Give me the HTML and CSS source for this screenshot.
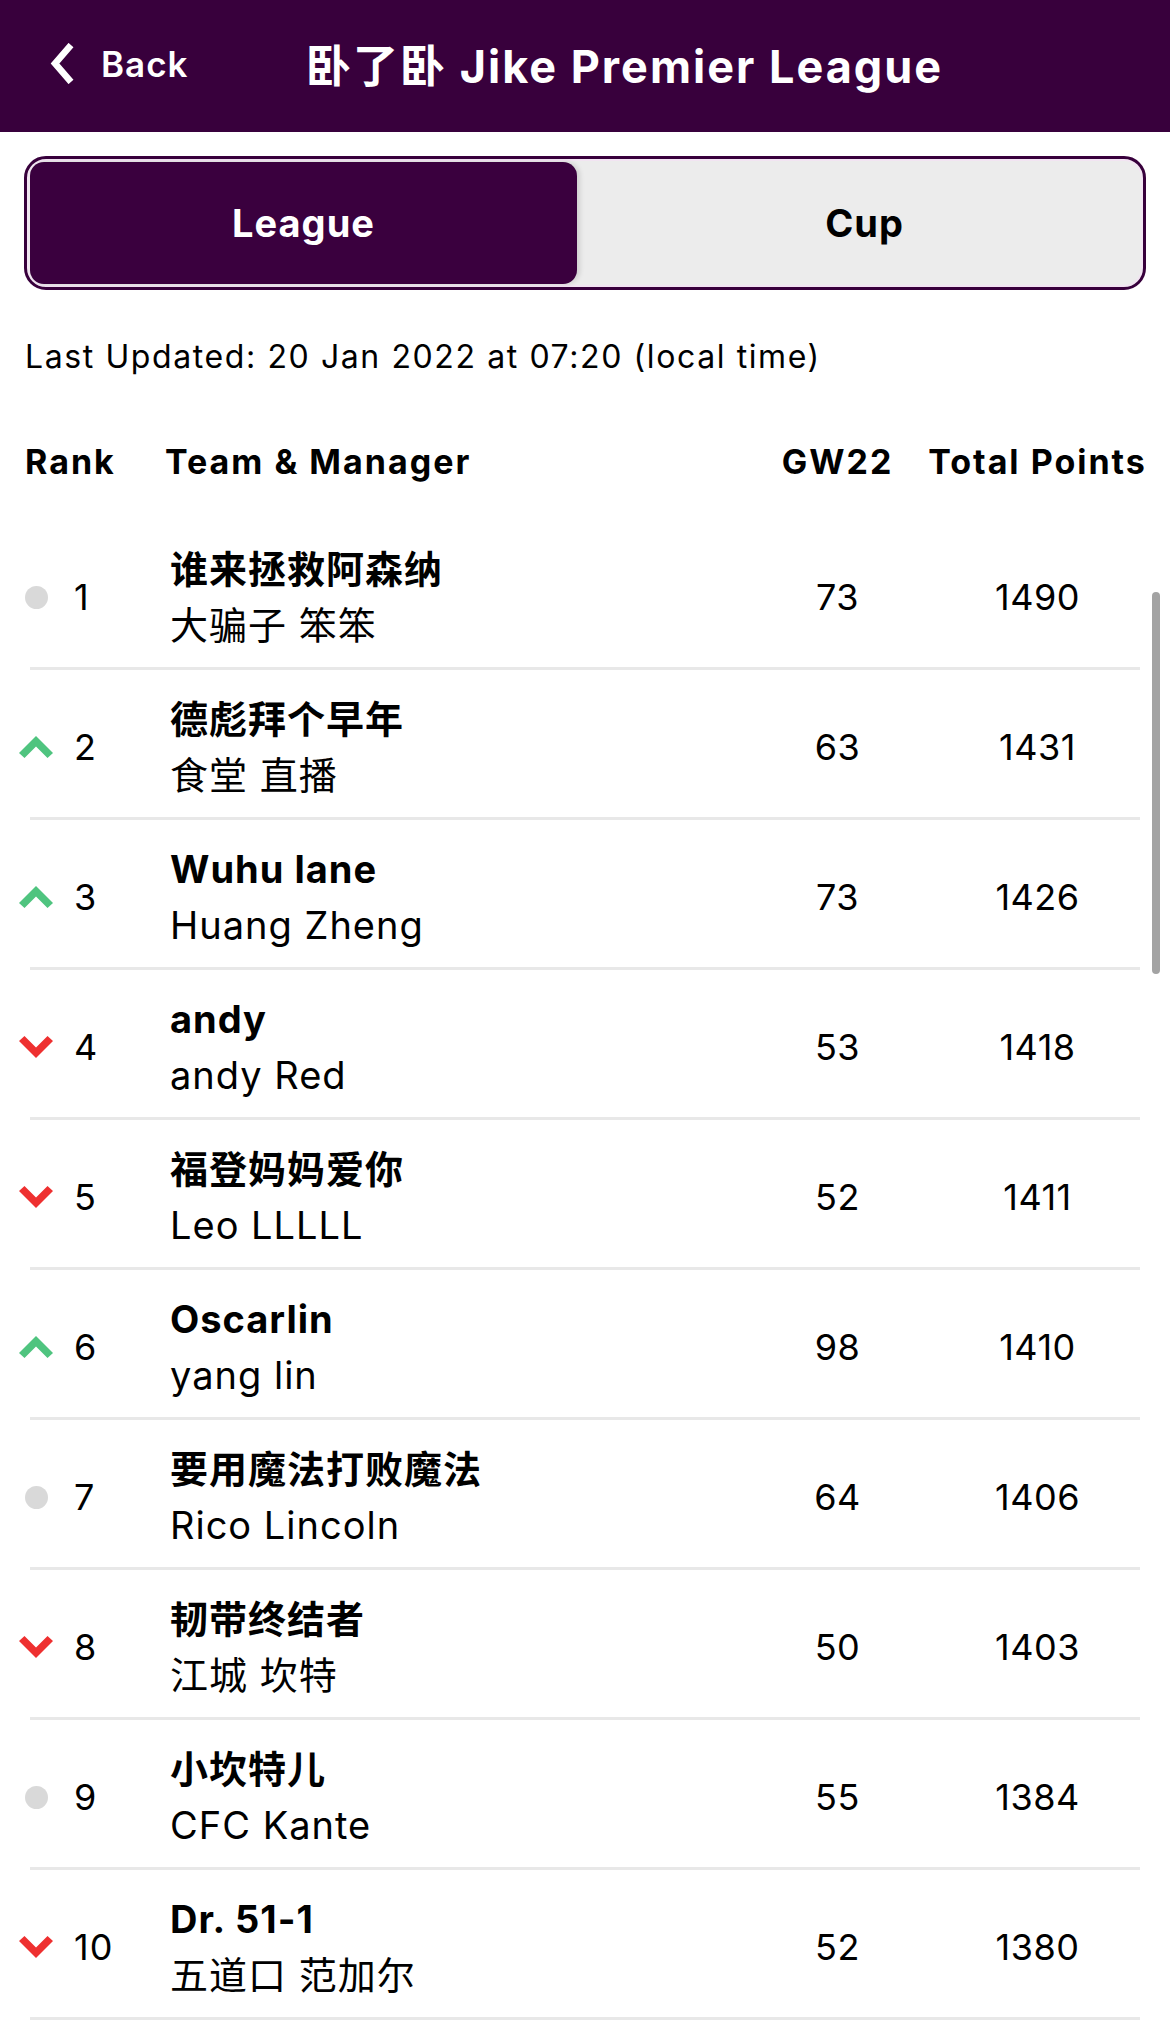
FILE: index.html
```html
<!DOCTYPE html>
<html lang="zh">
<head>
<meta charset="utf-8">
<title>Jike Premier League</title>
<link rel="stylesheet" href="styles.css">
</head>
<body>
<header class="topbar">
  <div class="back">
    <svg class="back-icon" width="26" height="41" viewBox="0 0 26 41"><polyline points="23,2 7,20.5 23,39" fill="none" stroke="#fff" stroke-width="6.5" stroke-linejoin="miter"/></svg>
    <span>Back</span>
  </div>
  <h1 class="title">卧了卧 Jike Premier League</h1>
</header>

<div class="toggle">
  <div class="tab active">League</div>
  <div class="tab cup">Cup</div>
</div>

<p class="updated">Last Updated: 20 Jan 2022 at 07:20 (local time)</p>

<div class="thead">
  <div class="th-rank">Rank</div>
  <div class="th-team">Team &amp; Manager</div>
  <div class="th-num">GW22</div>
  <div class="th-num">Total Points</div>
</div>

<div class="rows">
  <div class="row">
    <div class="ind"><span class="dot"></span></div>
    <div class="rank">1</div>
    <div class="team"><div class="tname">谁来拯救阿森纳</div><div class="mname">大骗子 笨笨</div></div>
    <div class="num">73</div>
    <div class="num">1490</div>
  </div>
  <div class="row">
    <div class="ind"><svg class="arrow" width="34" height="22" viewBox="0 0 34 22"><polygon points="17,0 34,17 28.5,22 17,10.5 5.5,22 0,17" fill="#4fc47f"/></svg></div>
    <div class="rank">2</div>
    <div class="team"><div class="tname">德彪拜个早年</div><div class="mname">食堂 直播</div></div>
    <div class="num">63</div>
    <div class="num">1431</div>
  </div>
  <div class="row">
    <div class="ind"><svg class="arrow" width="34" height="22" viewBox="0 0 34 22"><polygon points="17,0 34,17 28.5,22 17,10.5 5.5,22 0,17" fill="#4fc47f"/></svg></div>
    <div class="rank">3</div>
    <div class="team"><div class="tname">Wuhu lane</div><div class="mname">Huang Zheng</div></div>
    <div class="num">73</div>
    <div class="num">1426</div>
  </div>
  <div class="row">
    <div class="ind"><svg class="arrow" width="34" height="22" viewBox="0 0 34 22"><polygon points="17,22 34,5 28.5,0 17,11.5 5.5,0 0,5" fill="#ee3030"/></svg></div>
    <div class="rank">4</div>
    <div class="team"><div class="tname">andy</div><div class="mname">andy Red</div></div>
    <div class="num">53</div>
    <div class="num">1418</div>
  </div>
  <div class="row">
    <div class="ind"><svg class="arrow" width="34" height="22" viewBox="0 0 34 22"><polygon points="17,22 34,5 28.5,0 17,11.5 5.5,0 0,5" fill="#ee3030"/></svg></div>
    <div class="rank">5</div>
    <div class="team"><div class="tname">福登妈妈爱你</div><div class="mname">Leo LLLLL</div></div>
    <div class="num">52</div>
    <div class="num">1411</div>
  </div>
  <div class="row">
    <div class="ind"><svg class="arrow" width="34" height="22" viewBox="0 0 34 22"><polygon points="17,0 34,17 28.5,22 17,10.5 5.5,22 0,17" fill="#4fc47f"/></svg></div>
    <div class="rank">6</div>
    <div class="team"><div class="tname">Oscarlin</div><div class="mname">yang lin</div></div>
    <div class="num">98</div>
    <div class="num">1410</div>
  </div>
  <div class="row">
    <div class="ind"><span class="dot"></span></div>
    <div class="rank">7</div>
    <div class="team"><div class="tname">要用魔法打败魔法</div><div class="mname">Rico Lincoln</div></div>
    <div class="num">64</div>
    <div class="num">1406</div>
  </div>
  <div class="row">
    <div class="ind"><svg class="arrow" width="34" height="22" viewBox="0 0 34 22"><polygon points="17,22 34,5 28.5,0 17,11.5 5.5,0 0,5" fill="#ee3030"/></svg></div>
    <div class="rank">8</div>
    <div class="team"><div class="tname">韧带终结者</div><div class="mname">江城 坎特</div></div>
    <div class="num">50</div>
    <div class="num">1403</div>
  </div>
  <div class="row">
    <div class="ind"><span class="dot"></span></div>
    <div class="rank">9</div>
    <div class="team"><div class="tname">小坎特儿</div><div class="mname">CFC Kante</div></div>
    <div class="num">55</div>
    <div class="num">1384</div>
  </div>
  <div class="row">
    <div class="ind"><svg class="arrow" width="34" height="22" viewBox="0 0 34 22"><polygon points="17,22 34,5 28.5,0 17,11.5 5.5,0 0,5" fill="#ee3030"/></svg></div>
    <div class="rank">10</div>
    <div class="team"><div class="tname">Dr. 51-1</div><div class="mname">五道口 范加尔</div></div>
    <div class="num">52</div>
    <div class="num">1380</div>
  </div>
</div>

<div class="scrollbar"></div>
</body>
</html>
```
FILE: styles.css
```css
* { box-sizing: border-box; }
html, body {
  margin: 0;
  padding: 0;
  background: #ffffff;
}
body {
  width: 1170px;
  height: 2022px;
  overflow: hidden;
  font-family: "Inter", "Noto Sans CJK SC", sans-serif;
  color: #000;
}

.topbar {
  height: 132px;
  background: #38003c;
  display: flex;
  align-items: center;
  padding-left: 48px;
  padding-bottom: 5px;
  color: #fff;
}
.back {
  display: flex;
  align-items: center;
  gap: 27px;
  font-size: 35px;
  font-weight: 600;
  letter-spacing: 1px;
  width: 258px;
}
.back-icon { display: block; }
.title {
  margin: 0;
  font-size: 45px;
  font-weight: 700;
  letter-spacing: 2px;
}

.toggle {
  margin: 24px 24px 0 24px;
  height: 134px;
  border: 3px solid #38003c;
  border-radius: 22px;
  background: #ececec;
  box-shadow: inset 0 0 0 2px #f2e4f2;
  padding: 3px;
  display: grid;
  grid-template-columns: 547px 1fr;
}
.tab {
  display: flex;
  align-items: center;
  justify-content: center;
  font-size: 38px;
  font-weight: 700;
  letter-spacing: 1px;
  color: #000;
}
.tab.cup { padding-left: 12px; }
.tab.active {
  background: #3a003e;
  color: #fff;
  border-radius: 14px;
  box-shadow: 3px 0 5px rgba(0, 0, 0, 0.12);
}

.updated {
  margin: 47px 0 0 25px;
  font-size: 32px;
  line-height: 40px;
  letter-spacing: 1.6px;
  font-weight: 400;
}

.thead {
  display: grid;
  grid-template-columns: 152px 1fr 155px 245px;
  padding: 65px 10px 38px 25px;
  font-size: 34px;
  line-height: 40px;
  letter-spacing: 2px;
  font-weight: 700;
}
.th-team { margin-left: -12px; }
.th-num { text-align: center; }

.row {
  height: 150px;
  display: grid;
  grid-template-columns: 36px 116px 1fr 155px 245px;
  align-items: center;
  padding: 7px 10px 3px 18px;
  background: linear-gradient(#e8e8e8, #e8e8e8) no-repeat 30px 100% / 1110px 3px;
}
.ind {
  display: flex;
  justify-content: center;
  align-items: center;
}
.dot {
  width: 23px;
  height: 23px;
  border-radius: 50%;
  background: #d9d9d9;
}
.arrow { display: block; }
.rank {
  padding-left: 20px;
  font-size: 36px;
  letter-spacing: 1px;
  font-weight: 400;
}
.team {
  font-size: 38px;
  line-height: 56px;
  letter-spacing: 1px;
}
.tname { font-weight: 700; }
.mname { font-weight: 400; }
.num {
  text-align: center;
  font-size: 36px;
  letter-spacing: 0.5px;
  font-weight: 400;
}

.scrollbar {
  position: fixed;
  left: 1152px;
  top: 592px;
  width: 8px;
  height: 382px;
  border-radius: 4px;
  background: #a3a3a3;
}
```
